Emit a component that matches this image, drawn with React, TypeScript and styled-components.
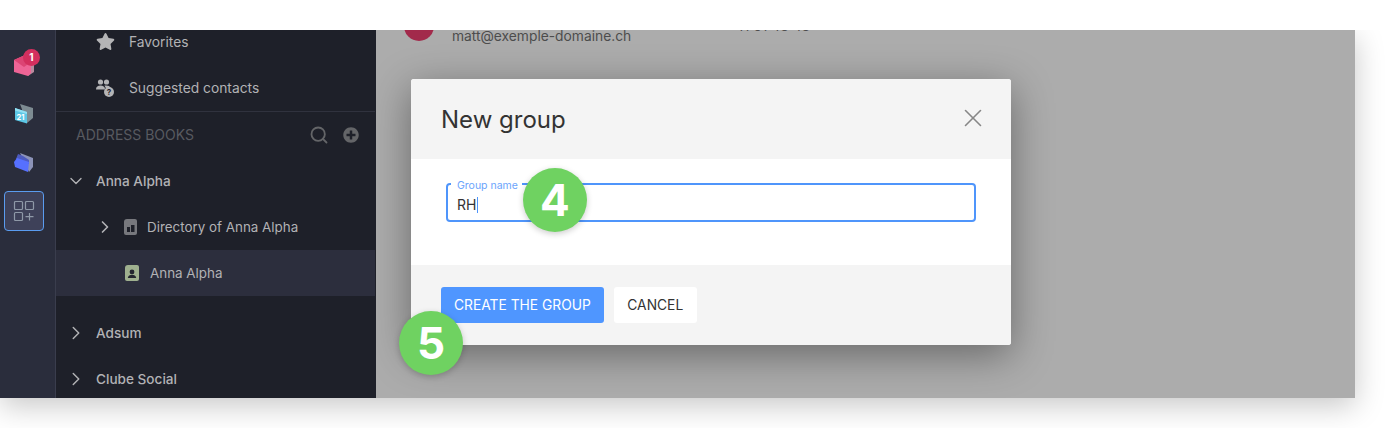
import styled, { createGlobalStyle } from 'styled-components'
import { FaStar, FaPlusCircle } from 'react-icons/fa'
import { ChevronDown, ChevronRight, Search, X } from 'lucide-react'

const GlobalStyle = createGlobalStyle`
  body {
    margin: 0;
    padding: 0;
    background: #ffffff;
    font-family: "Inter", "Liberation Sans", sans-serif;
  }
`

const MailIcon = () => (
  <svg width="24" height="24" viewBox="0 0 24 24">
    <path d="M13 2 L22 8 L22 19 L16 23 Z" fill="#b98a9e" />
    <path d="M2 7 L13 2 L19 9 L19 20 L16 23 L2 19 Z" fill="#ee6496" />
    <path d="M2 7 L12 14 L19 9 L13 2 Z" fill="#dc4474" />
  </svg>
)

const CalendarIcon = () => (
  <svg width="24" height="24" viewBox="0 0 24 24">
    <path d="M8 3 L21 7 L21 17 L15 22 Z" fill="#7d8b92" />
    <path d="M3 7 L15 11 L15 22.5 L3 19 Z" fill="#5cc7e6" />
    <path d="M3 7 L15 11 L15 13 L3 9.5 Z" fill="#93dff2" />
    <text x="4.6" y="18.5" fontSize="7.5" fontWeight="700" fill="#ffffff" fontFamily="Inter, sans-serif">21</text>
  </svg>
)

const FolderIcon = () => (
  <svg width="24" height="24" viewBox="0 0 24 24">
    <path d="M8 4 L21 9 L21 18 L17 23 Z" fill="#8c93b8" />
    <path d="M4 10 L6 5 L11 7 L17 11 L17 15 Z" fill="#4d5bc0" />
    <path d="M2 13 L5 9 L17 13 L16 23 L3 18 Z" fill="#5670ff" />
  </svg>
)

const AppsIcon = () => (
  <svg width="22" height="22" viewBox="0 0 22 22" fill="none" stroke="#8f99a8" strokeWidth="1.2">
    <rect x="1.5" y="1.5" width="8" height="8" rx="1" />
    <rect x="12.5" y="1.5" width="8" height="8" rx="1" />
    <rect x="1.5" y="12.5" width="8" height="8" rx="1" />
    <path d="M16.5 13 V20.5 M12.5 16.7 H20.5" />
  </svg>
)

const ContactsHelpIcon = () => (
  <svg width="18" height="18" viewBox="0 0 18 18">
    <circle cx="4.5" cy="3" r="2.6" fill="#b4b4b6" />
    <circle cx="10.5" cy="3" r="2.6" fill="#b4b4b6" />
    <path d="M0 10.5 C0 7.5 2 6.5 4.5 6.5 C7 6.5 9 7.5 9 10.5 Z" fill="#b4b4b6" />
    <path d="M8.5 6.6 C11 6 14 6.6 14.5 9 L10 9.5 Z" fill="#b4b4b6" />
    <circle cx="13" cy="13" r="5" fill="#b4b4b6" />
    <text x="13" y="16" textAnchor="middle" fontSize="8" fontWeight="700" fill="#1e2029" fontFamily="Inter, sans-serif">?</text>
  </svg>
)

const DirectoryIcon = () => (
  <svg width="13" height="16" viewBox="0 0 13 16">
    <path d="M0 3 L0 14 Q0 16 2 16 L11 16 Q13 16 13 14 L13 2 Q13 0 11 0 L3 0 Q0 0 0 3 Z" fill="#77787d" />
    <rect x="3" y="8" width="3" height="5" fill="#1e2029" />
    <rect x="7" y="6" width="3.5" height="7" fill="#1e2029" />
  </svg>
)

const ContactBookIcon = () => (
  <svg width="14" height="16" viewBox="0 0 14 16">
    <path d="M0 3 L0 14 Q0 16 2 16 L12 16 Q14 16 14 14 L14 2 Q14 0 12 0 L3 0 Q0 0 0 3 Z" fill="#9fb08f" />
    <circle cx="7" cy="7" r="2.4" fill="#23252f" />
    <path d="M2.8 13 C3 10.4 5 10 7 10 C9 10 11 10.4 11.2 13 Z" fill="#23252f" />
  </svg>
)

export default function App() {
  return (
    <Page>
      <GlobalStyle />
      <TopStrip />
      <AppWindow>
        <Rail>
          <RailCell>
            <MailIcon />
            <MailBadge>1</MailBadge>
          </RailCell>
          <RailCell>
            <CalendarIcon />
          </RailCell>
          <RailCell>
            <FolderIcon />
          </RailCell>
          <AppsTile>
            <AppsIcon />
          </AppsTile>
        </Rail>

        <Sidebar>
          <NavRow>
            <NavIcon><FaStar size={19} /></NavIcon>
            Favorites
          </NavRow>
          <NavRow>
            <NavIcon><ContactsHelpIcon /></NavIcon>
            Suggested contacts
          </NavRow>
          <BooksHeader>
            <BooksTitle>ADDRESS BOOKS</BooksTitle>
            <BooksActions>
              <Search size={20} strokeWidth={2.2} />
              <FaPlusCircle size={16} />
            </BooksActions>
          </BooksHeader>
          <BookRow>
            <Chevron><ChevronDown size={20} strokeWidth={1.6} /></Chevron>
            Anna Alpha
          </BookRow>
          <SubRow>
            <SubChevron><ChevronRight size={20} strokeWidth={2} /></SubChevron>
            <DirectoryIcon />
            Directory of Anna Alpha
          </SubRow>
          <SelectedRow>
            <ContactBookIcon />
            Anna Alpha
          </SelectedRow>
          <SpacedBookRow>
            <Chevron><ChevronRight size={22} strokeWidth={1.6} /></Chevron>
            Adsum
          </SpacedBookRow>
          <BookRow>
            <Chevron><ChevronRight size={22} strokeWidth={1.6} /></Chevron>
            Clube Social
          </BookRow>
        </Sidebar>

        <Main>
          <ContactLine>
            <Avatar />
            <ContactMail>matt@exemple-domaine.ch</ContactMail>
            <ContactPhone>+41 61 43 43</ContactPhone>
          </ContactLine>

          <Modal>
            <ModalHeader>
              <ModalTitle>New group</ModalTitle>
              <CloseButton><X size={30} strokeWidth={1.3} /></CloseButton>
            </ModalHeader>
            <ModalBody>
              <Field>
                <FieldLabel>Group name</FieldLabel>
                <FieldValue>RH</FieldValue>
              </Field>
            </ModalBody>
            <ModalFooter>
              <PrimaryButton>CREATE THE GROUP</PrimaryButton>
              <CancelButton>CANCEL</CancelButton>
            </ModalFooter>
          </Modal>
        </Main>
      </AppWindow>
      <StepBadge $left={523} $top={168}>4</StepBadge>
      <StepBadge $left={399} $top={311}>5</StepBadge>
    </Page>
  )
}

const Page = styled.div`
  position: relative;
  height: 428px;
  overflow: hidden;
  background: #ffffff;
`

const TopStrip = styled.div`
  position: relative;
  z-index: 2;
  height: 30px;
  background: #ffffff;
`

const AppWindow = styled.div`
  position: relative;
  z-index: 1;
  display: flex;
  width: 1355px;
  height: 368px;
  overflow: hidden;
  box-shadow: 0 8px 28px rgba(0, 0, 0, 0.22);
`

const Rail = styled.nav`
  flex: 0 0 56px;
  box-sizing: border-box;
  display: flex;
  flex-direction: column;
  align-items: flex-start;
  padding: 11px 0 0 4px;
  background: #2a2d3c;
  border-right: 1px solid #3a3d4d;
`

const RailCell = styled.div`
  position: relative;
  display: flex;
  align-items: center;
  justify-content: center;
  width: 40px;
  height: 48px;
`

const MailBadge = styled.span`
  position: absolute;
  top: 8px;
  left: 19px;
  width: 17px;
  height: 17px;
  border-radius: 50%;
  background: #d32f5e;
  color: #ffffff;
  font-size: 10px;
  font-weight: 700;
  line-height: 17px;
  text-align: center;
`

const AppsTile = styled.div`
  display: flex;
  align-items: center;
  justify-content: center;
  box-sizing: border-box;
  width: 40px;
  height: 40px;
  margin-top: 6px;
  border: 1px solid #5a9cf0;
  border-radius: 4px;
  background: #3e4159;
`

const Sidebar = styled.aside`
  flex: 0 0 320px;
  box-sizing: border-box;
  margin-top: -11px;
  border-right: 1px solid #1e2029;
  background: #1e2029;
  color: #b2b2b5;
  font-size: 13.6px;
`

const NavRow = styled.div`
  display: flex;
  align-items: center;
  box-sizing: border-box;
  height: 46px;
  padding: 0 0 1px 39px;
  font-size: 13.8px;
`

const NavIcon = styled.span`
  display: flex;
  align-items: center;
  justify-content: center;
  width: 20px;
  margin-right: 14px;
  color: #b4b4b6;
`

const BooksHeader = styled.div`
  display: flex;
  align-items: center;
  justify-content: space-between;
  box-sizing: border-box;
  height: 47px;
  padding: 0 16px 1px 20px;
  border-top: 1px solid #30323e;
  color: #585a60;
`

const BooksTitle = styled.span`
  font-size: 14px;
`

const BooksActions = styled.span`
  display: flex;
  align-items: center;
  gap: 14px;
  color: #646568;
`

const BookRow = styled.div`
  display: flex;
  align-items: center;
  box-sizing: border-box;
  height: 46px;
  padding: 0 0 1px 12px;
  font-weight: 500;
`

const SpacedBookRow = styled(BookRow)`
  margin-top: 14px;
`

const Chevron = styled.span`
  display: flex;
  justify-content: center;
  width: 16px;
  margin-right: 12px;
  svg {
    flex-shrink: 0;
  }
`

const SubRow = styled.div`
  display: flex;
  align-items: center;
  box-sizing: border-box;
  height: 46px;
  padding: 0 0 1px 41px;
  gap: 10px;
  font-size: 13.4px;
`

const SubChevron = styled(Chevron)`
  width: 15px;
  margin-right: 2px;
`

const SelectedRow = styled.div`
  display: flex;
  align-items: center;
  box-sizing: border-box;
  gap: 11px;
  height: 46px;
  padding: 0 0 1px 69px;
  background: #2c2e3d;
  font-size: 13.4px;
`

const Main = styled.main`
  position: relative;
  flex: 1;
  overflow: hidden;
  background: #acacac;
`

const ContactLine = styled.div`
  display: flex;
  align-items: flex-start;
  height: 50px;
  margin-top: -20px;
  padding-left: 28px;
`

const Avatar = styled.div`
  flex: 0 0 30px;
  height: 30px;
  margin-top: 1px;
  border-radius: 50%;
  background: #a22a4b;
`

const ContactMail = styled.span`
  width: 276px;
  margin: 18px 0 0 18px;
  color: #4c4c4c;
  font-size: 13.8px;
  line-height: 17px;
`

const ContactPhone = styled.span`
  margin: 8px 0 0 -2px;
  color: #4c4c4c;
  font-size: 13.8px;
  line-height: 17px;
`

const Modal = styled.section`
  position: absolute;
  top: 49px;
  left: 35px;
  width: 600px;
  height: 266px;
  display: flex;
  flex-direction: column;
  border-radius: 3px;
  background: #ffffff;
  box-shadow: 0 10px 40px rgba(0, 0, 0, 0.4);
`

const ModalHeader = styled.header`
  display: flex;
  align-items: center;
  justify-content: space-between;
  height: 80px;
  padding: 0 23px 0 30px;
  border-radius: 3px 3px 0 0;
  background: #f4f4f4;
`

const ModalTitle = styled.h2`
  margin: 0;
  color: #333333;
  font-size: 24px;
  font-weight: 400;
`

const CloseButton = styled.span`
  display: flex;
  margin-top: -2px;
  color: #878787;
`

const ModalBody = styled.div`
  flex: 1;
  padding: 24px 35px 0;
`

const Field = styled.div`
  position: relative;
  box-sizing: border-box;
  height: 39px;
  border: 2px solid #4f95fb;
  border-radius: 4px;
`

const FieldLabel = styled.span`
  position: absolute;
  top: -4px;
  left: 3px;
  padding: 0 4px 0 6px;
  background: #ffffff;
  color: #6ba4fc;
  font-size: 10.5px;
  line-height: 9px;
`

const FieldValue = styled.span`
  position: absolute;
  top: 12px;
  left: 9px;
  padding-right: 1px;
  border-right: 1px solid #4f95fb;
  color: #333333;
  font-size: 14px;
  line-height: 16px;
`

const ModalFooter = styled.footer`
  display: flex;
  align-items: flex-start;
  gap: 10px;
  height: 80px;
  box-sizing: border-box;
  padding: 22px 30px 0;
  border-radius: 0 0 3px 3px;
  background: #f4f4f4;
`

const PrimaryButton = styled.button`
  height: 36px;
  padding: 0 13px 1px;
  border: none;
  border-radius: 3px;
  background: #4f96ff;
  color: #ffffff;
  font-family: inherit;
  font-size: 13.8px;
`

const CancelButton = styled(PrimaryButton)`
  padding: 0 13.5px 1px;
  background: #ffffff;
  color: #333333;
`

const StepBadge = styled.div<{ $left: number; $top: number }>`
  position: absolute;
  z-index: 3;
  left: ${p => p.$left}px;
  top: ${p => p.$top}px;
  width: 64px;
  height: 64px;
  border-radius: 50%;
  background: #6fd261;
  box-shadow: 0 2px 6px rgba(0, 0, 0, 0.2);
  color: #ffffff;
  font-family: "Inter", "Liberation Sans", sans-serif;
  font-size: 44px;
  font-weight: 700;
  line-height: 64px;
  text-align: center;
`
